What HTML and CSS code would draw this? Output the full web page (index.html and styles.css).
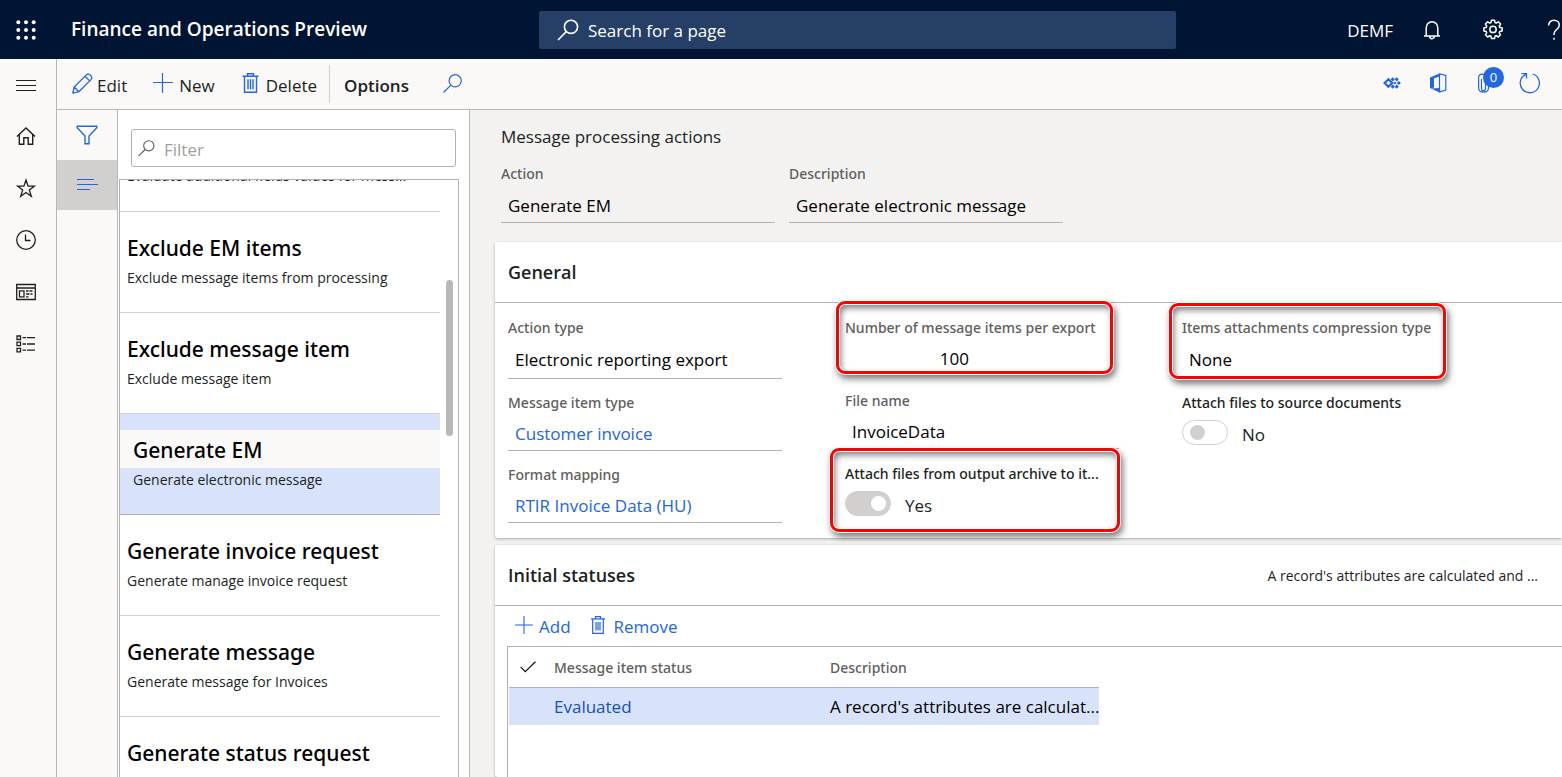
FILE: index.html
```html
<!DOCTYPE html>
<html lang="en">
<head>
<meta charset="utf-8">
<title>Message processing actions</title>
<link rel="stylesheet" href="styles.css">
</head>
<body>
<div class="app">
  <header class="topbar">
    <div class="brand">
      <button class="waffle" aria-label="App launcher">
        <svg width="20" height="20" viewBox="0 0 20 20" fill="currentColor"><circle cx="2.3" cy="2.3" r="2"/><circle cx="10" cy="2.3" r="2"/><circle cx="17.7" cy="2.3" r="2"/><circle cx="2.3" cy="10" r="2"/><circle cx="10" cy="10" r="2"/><circle cx="17.7" cy="10" r="2"/><circle cx="2.3" cy="17.7" r="2"/><circle cx="10" cy="17.7" r="2"/><circle cx="17.7" cy="17.7" r="2"/></svg>
      </button>
      <a class="product" href="#">Finance and Operations Preview</a>
    </div>
    <label class="search">
      <svg width="22" height="22" viewBox="0 0 22 22" fill="none" stroke="currentColor" stroke-width="1.6"><circle cx="14" cy="7.8" r="6.6"/><path d="M9.3 12.6 1 21"/></svg>
      <input class="search-input" type="text" placeholder="Search for a page" aria-label="Search for a page">
    </label>
    <div class="top-actions">
      <button class="company">DEMF</button>
      <button class="top-btn" aria-label="Notifications">
        <svg width="18" height="20" viewBox="0 0 18 20" fill="none" stroke="currentColor" stroke-width="1.5"><path d="M1 16H17M3.2 16V8.2C3.2 4.4 5.8 1.8 9 1.8S14.8 4.4 14.8 8.2V16M6.6 16.3C6.6 19.4 11.4 19.4 11.4 16.3"/></svg>
      </button>
      <button class="top-btn" aria-label="Settings">
        <svg width="22" height="22" viewBox="0 0 22 22" fill="none" stroke="currentColor" stroke-width="1.5" stroke-linejoin="round"><path d="M9 3.500 9.500 1.200h3l.5 2.300 1.300.6 2-1.300 2.300 2.200-1.300 2 .5 1.400 2.300.4v3.200l-2.300.5-.6 1.300 1.300 2-2.200 2.200-2-1.300-1.300.6-.5 2.300h-3L9 17.300l-1.300-.6-2 1.300-2.300-2.200 1.300-2-.5-1.300-2.300-.5V8.800l2.300-.4.5-1.400-1.300-2 2.300-2.200 2 1.300z"/><circle cx="11" cy="10.400" r="3.200"/></svg>
      </button>
      <button class="top-btn" aria-label="Help">
        <svg width="14" height="22" viewBox="0 0 14 22" fill="none" stroke="currentColor" stroke-width="1.5"><path d="M1.6 6.5C1.6 3.200 4 1.200 7 1.200s5.300 1.900 5.300 4.800c0 4.300-5.300 4.700-5.300 8.800v1.300M7 18.800v2"/></svg>
      </button>
    </div>
  </header>

  <div class="shell">
    <nav class="rail" aria-label="Main">
      <button class="rail-btn rail-menu" aria-label="Expand the navigation pane"><svg width="20" height="12" viewBox="0 0 20 12" stroke="currentColor" stroke-width="1" shape-rendering="crispEdges"><path d="M0 .5H20M0 5.5H20M0 10.5H20"/></svg></button>
      <button class="rail-btn" aria-label="Home"><svg width="20" height="20" viewBox="0 0 20 20" fill="none" stroke="currentColor" stroke-width="1.4"><path d="M1 10.6 10 1.9l9 8.7M3.3 8.700v9.600h4.500v-6.500h4.400v6.500h4.500V8.700"/></svg></button>
      <button class="rail-btn" aria-label="Favorites"><svg width="20" height="20" viewBox="0 0 20 20" fill="none" stroke="currentColor" stroke-width="1.3"><path d="M10 2l2.100 6.100h6.400l-5.200 3.900 2 6.300L10 14.500l-5.300 3.800 2-6.300L1.500 8.100h6.400z"/></svg></button>
      <button class="rail-btn" aria-label="Recent"><svg width="20" height="20" viewBox="0 0 20 20" fill="none" stroke="currentColor" stroke-width="1.3"><circle cx="10" cy="10" r="9.3"/><path d="M9.500 4.500v6h5"/></svg></button>
      <button class="rail-btn" aria-label="Workspaces"><svg width="20" height="18" viewBox="0 0 20 18" fill="none" stroke="currentColor" stroke-width="1.3"><path d="M.7 1.500h18.600v15H.7zM.7 5h18.600M3.500 7.800h4.500v6H3.500zM10 8h2.500M10 11h3.500M10 13.800h2.500M13.500 8h3M14.500 11h2"/></svg></button>
      <button class="rail-btn" aria-label="Modules"><svg width="20" height="18" viewBox="0 0 20 18" fill="none" stroke="currentColor" stroke-width="1.3"><path d="M1 1h3.500v3.500H1zM1 7.200h3.500v3.500H1zM1 13.400h3.500v3.500H1zM6.500 2.700h3.500M11 2.700h8M6.500 9h3.500M11 9h8M6.500 15.200h3.500M11 15.200h8"/></svg></button>
    </nav>

    <div class="workspace">
      <div class="commands">
        <button class="cmd cmd-edit"><svg width="21" height="21" viewBox="0 0 21 21" fill="none" stroke="currentColor" stroke-width="1.3" stroke-linejoin="round"><path d="M.8 20.200 2.200 14 14.300 1.900a2.600 2.600 0 0 1 3.700 0l1 1a2.600 2.600 0 0 1 0 3.700L6.900 18.700zM2.200 14l4.700 4.700M13 3.200l4.700 4.700"/></svg>Edit</button>
        <button class="cmd cmd-new"><svg width="20" height="20" viewBox="0 0 20 20" stroke="currentColor" stroke-width="1.2"><path d="M0 9.500H20M9.500 0V20"/></svg>New</button>
        <button class="cmd cmd-delete"><svg width="17" height="20" viewBox="0 0 17 20" fill="none" stroke="currentColor" stroke-width="1.4"><path d="M.5 3.300h16M5.500 3V.8h6V3M2.500 3.500v15.700h12V3.500M6 6.300v10M8.500 6.300v10M11 6.300v10"/></svg>Delete</button>
        <button class="cmd cmd-options">Options</button>
        <button class="cmd cmd-search" aria-label="Search actions"><svg width="19" height="19" viewBox="0 0 19 19" fill="none" stroke="currentColor" stroke-width="1.2"><circle cx="12.2" cy="6.8" r="6.1"/><path d="M7.9 11.100.5 18.500"/></svg></button>
        <div class="cmd-right">
          <button class="cmd-icon" aria-label="Power Apps"><svg width="18" height="12" viewBox="0 0 18 12"><path d="M5.400 2.200 9.200 6 5.400 9.800 1.600 6z" fill="none" stroke="currentColor" stroke-width="2.200"/><path d="M9.700.2l2.100 2.100-2.100 2.100-2.100-2.100zM13.700.2l2.100 2.100-2.100 2.100-2.100-2.100zM15.800 3.900l2.100 2.100-2.100 2.100-2.100-2.100zM9.700 7.600l2.100 2.100-2.100 2.100-2.100-2.100zM13.700 7.600l2.100 2.100-2.100 2.100-2.100-2.100zM11.800 4.500 13.300 6l-1.500 1.500L10.300 6z" fill="currentColor"/></svg></button>
          <button class="cmd-icon" aria-label="Open in Microsoft Office"><svg width="17" height="20" viewBox="0 0 17 20"><path fill="currentColor" d="M0 4.500 9.500.5v3L4 5.200v9.300L1.200 15.600 0 15zM1 15.500l8.500-.4V19.500z"/><path d="M9.500.9 15.800 2.500v14.500L9.500 18.900z" fill="none" stroke="currentColor" stroke-width="1.2"/></svg></button>
          <button class="cmd-icon cmd-attach" aria-label="Attachments"><svg width="12" height="20" viewBox="0 0 12 20" fill="none" stroke="currentColor" stroke-width="1.2"><path d="M3.500 6v9.500c0 3 4 3 4 0V4.500c0-4.500-6.900-4.500-6.900 0V15c0 5.500 9.900 5.500 9.900 0V5"/></svg><span class="badge">0</span></button>
          <button class="cmd-icon" aria-label="Refresh"><svg width="22" height="22" viewBox="0 0 22 22" fill="none" stroke="currentColor" stroke-width="1.3"><path d="M13.800 2A9.600 9.600 0 1 1 6 2.800M2.500 1.700h5V6.500M7.500 1.700l-3 2.600"/></svg></button>
        </div>
      </div>

      <div class="columns">
        <div class="strip">
          <button class="strip-btn" aria-label="Show filters"><svg width="22" height="20" viewBox="0 0 22 20" fill="none" stroke="currentColor" stroke-width="1.4"><path d="M1.200 1.200h19.600v1.500L13 11v7.800H9V11L1.200 2.700z"/></svg></button>
          <button class="strip-btn strip-on" aria-label="Show list"><svg width="21" height="12" viewBox="0 0 21 12" stroke="currentColor" stroke-width="1" shape-rendering="crispEdges"><path d="M0 .5H17M0 5.500H21M0 10.500H13"/></svg></button>
        </div>

        <aside class="list-pane">
          <label class="filter">
            <svg width="17" height="17" viewBox="0 0 17 17" fill="none" stroke="currentColor" stroke-width="1.1"><circle cx="10.8" cy="5.8" r="5.1"/><path d="M7.100 9.500.5 16.100"/></svg>
            <input class="filter-input" type="text" placeholder="Filter" aria-label="Filter">
          </label>
          <div class="list-box">
            <ul class="records">
              <li class="record record-first"><a class="record-link" href="#"><span class="record-sub">Evaluate additional fields values for mess...</span></a></li>
              <li class="record"><a class="record-link" href="#"><span class="record-title">Exclude EM items</span><span class="record-sub">Exclude message items from processing</span></a></li>
              <li class="record"><a class="record-link" href="#"><span class="record-title">Exclude message item</span><span class="record-sub">Exclude message item</span></a></li>
              <li class="record record-on"><a class="record-link" href="#"><span class="record-title">Generate EM</span><span class="record-sub">Generate electronic message</span></a></li>
              <li class="record"><a class="record-link" href="#"><span class="record-title">Generate invoice request</span><span class="record-sub">Generate manage invoice request</span></a></li>
              <li class="record"><a class="record-link" href="#"><span class="record-title">Generate message</span><span class="record-sub">Generate message for Invoices</span></a></li>
              <li class="record"><a class="record-link" href="#"><span class="record-title">Generate status request</span></a></li>
            </ul>
            <div class="thumb"></div>
          </div>
        </aside>

        <main class="form">
          <h1 class="form-title">Message processing actions</h1>
          <div class="key-fields">
            <div class="field"><label class="label" for="action">Action</label><input class="value" id="action" value="Generate EM" readonly></div>
            <div class="field"><label class="label" for="desc">Description</label><input class="value" id="desc" value="Generate electronic message" readonly></div>
          </div>

          <section class="card">
            <h2 class="card-head">General</h2>
            <div class="fields">
              <div class="field-col">
                <div class="field"><label class="label" for="type">Action type</label><input class="value value-combo" id="type" value="Electronic reporting export" readonly></div>
                <div class="field"><span class="label">Message item type</span><a class="value value-link" href="#">Customer invoice</a></div>
                <div class="field"><span class="label">Format mapping</span><a class="value value-link" href="#">RTIR Invoice Data (HU)</a></div>
              </div>
              <div class="field-col field-col-mid">
                <div class="field marked marked-number"><label class="label" for="count">Number of message items per export</label><input class="value value-number" id="count" value="100" readonly></div>
                <div class="field"><label class="label" for="file">File name</label><input class="value" id="file" value="InvoiceData" readonly></div>
                <div class="field marked marked-archive"><label class="label label-strong" for="archive">Attach files from output archive to it...</label><div class="switch-row"><input class="switch" type="checkbox" role="switch" id="archive" checked><span class="switch-text">Yes</span></div></div>
              </div>
              <div class="field-col">
                <div class="field marked marked-type"><label class="label" for="zip">Items attachments compression type</label><input class="value value-combo" id="zip" value="None" readonly></div>
                <div class="field"><label class="label label-strong" for="source">Attach files to source documents</label><div class="switch-row"><input class="switch" type="checkbox" role="switch" id="source"><span class="switch-text">No</span></div></div>
              </div>
            </div>
          </section>

          <section class="card card-last">
            <h2 class="card-head">Initial statuses<span class="card-note">A record's attributes are calculated and ...</span></h2>
            <div class="tools">
              <button class="tool"><svg width="18" height="18" viewBox="0 0 18 18" stroke="currentColor" stroke-width="1.1"><path d="M0 9H18M9 0V18"/></svg>Add</button>
              <button class="tool tool-remove"><svg width="14" height="18" viewBox="0 0 14 18" fill="none" stroke="currentColor" stroke-width="1.2"><path d="M0 2.800h14M4.500 2.600V.7h5v1.900M1.700 3v14.300h10.600V3M5 6v8.500M7 6v8.500M9 6v8.500"/></svg>Remove</button>
            </div>
            <div class="grid-box">
              <table class="grid">
                <thead><tr><th class="g-check"><svg width="16" height="12" viewBox="0 0 16 12" fill="none" stroke="#111" stroke-width="1.2" role="img" aria-label="Select all"><path d="M.6 5.800 5.300 10.700 15.400.7"/></svg></th><th class="g-status">Message item status</th><th>Description</th></tr></thead>
                <tbody><tr><td></td><td><a class="g-link" href="#">Evaluated</a></td><td>A record's attributes are calculat...</td></tr></tbody>
              </table>
            </div>
          </section>
        </main>
      </div>
    </div>
  </div>
</div>
</body>
</html>
```
FILE: styles.css
```css
* { box-sizing: border-box; }

body {
  margin: 0;
  font-family: "Open Sans", "Noto Sans", sans-serif;
  font-size: 17px;
  color: #201f1e;
}

button, input {
  margin: 0;
  padding: 0;
  border: 0;
  background: none;
  font: inherit;
  color: inherit;
}

a { color: inherit; text-decoration: none; }
svg { flex: none; display: block; }
h1, h2, ul { margin: 0; padding: 0; }
input { min-width: 0; outline: 0; }

.app {
  display: flex;
  flex-direction: column;
  height: 100vh;
  overflow: hidden;
}

/* Top bar */
.topbar {
  display: flex;
  flex: none;
  align-items: center;
  height: 59px;
  background: #001433;
  color: #fff;
  overflow: hidden;
}
.brand { display: flex; align-items: center; flex: 0 0 539px; }
.waffle { padding: 0 35px 0 16px; }
.product { padding-bottom: 1px; font-size: 19px; font-weight: 600; }
.search {
  display: flex;
  align-items: center;
  flex: 1;
  gap: 9px;
  height: 38px;
  padding: 1px 18px 0;
  border-radius: 2px;
  background: #263f66;
}
.search-input { flex: 1; }
.search-input::placeholder { color: #fff; opacity: 1; }
.top-actions {
  display: flex;
  align-items: center;
  justify-content: flex-end;
  flex: 0 0 408px;
  margin-right: -22px;
}
.company { padding: 1px 8px 0 0; }
.top-btn { display: flex; justify-content: center; width: 61px; }

/* Shell */
.shell { display: flex; flex: 1; min-height: 0; }
.rail {
  flex: 0 0 57px;
  border-right: 1px solid #bab8b7;
  background: #faf9f8;
}
.rail-btn {
  display: flex;
  align-items: center;
  justify-content: center;
  width: 52px;
  height: 52px;
}
.rail-menu { height: 51px; padding-top: 2px; }
.workspace { display: flex; flex-direction: column; flex: 1; min-width: 0; }

/* Command bar */
.commands {
  display: flex;
  align-items: center;
  flex: none;
  height: 51px;
  padding: 0 9px 0 15px;
  border-bottom: 1px solid #bab8b7;
  background: #faf9f8;
}
.cmd { display: flex; align-items: center; gap: 4px; height: 38px; padding: 2px 0 0; }
.cmd svg, .cmd-icon { color: #2266e3; }
.cmd svg { margin-bottom: 4px; }
.cmd-new { margin-left: 26px; gap: 6px; }
.cmd-delete { margin-left: 27px; gap: 7px; padding-right: 12px; border-right: 1px solid #d2d0ce; }
.cmd-options { margin-left: 14px; font-weight: 600; }
.cmd-search { margin-left: 34px; }
.cmd-right { display: flex; align-items: center; margin-left: auto; padding-bottom: 2px; }
.cmd-icon { display: flex; align-items: center; justify-content: center; position: relative; width: 46px; }
.badge {
  position: absolute;
  left: 22px;
  top: -6px;
  width: 21px;
  height: 21px;
  border-radius: 50%;
  background: #2266e3;
  color: #fff;
  font-size: 13px;
  line-height: 21px;
}

.columns { display: flex; flex: 1; min-height: 0; }
.strip { flex: 0 0 61px; border-right: 1px solid #bab8b7; background: #faf9f8; }
.strip-btn {
  display: flex;
  align-items: center;
  justify-content: center;
  width: 60px;
  height: 50px;
  color: #2266e3;
}
.strip-on { background: #d2d0ce; }

/* Record list */
.list-pane {
  display: flex;
  flex-direction: column;
  flex: 0 0 352px;
  padding: 19px 10px 0 1px;
  border-right: 1px solid #bab8b7;
  background: #fff;
}
.filter {
  display: flex;
  align-items: center;
  gap: 9px;
  height: 38px;
  margin: 0 3px 12px 12px;
  padding: 0 6px;
  border: 1px solid #b3b0ad;
  border-radius: 3px;
  color: #605e5c;
}
.filter-input { flex: 1; padding-top: 3px; }
.filter-input::placeholder { color: #a19f9d; opacity: 1; }
.list-box {
  display: flex;
  flex: 1;
  min-height: 0;
  border: 1px solid #b3b0ad;
  border-bottom: 0;
  overflow: hidden;
}
.records { flex: 1; list-style: none; }
.record { height: 101px; border-bottom: 1px solid #d2d0ce; }
.record-first { height: 48px; margin-top: -16px; }
.record-link { display: block; padding-top: 16px; }
.record-first .record-link { padding-top: 0; }
.record-title {
  display: block;
  padding: 2px 7px 0;
  font-family: "Noto Sans", sans-serif;
  font-size: 21px;
  font-weight: 500;
  line-height: 36px;
  color: #000;
}
.record-sub {
  display: block;
  padding: 0 7px;
  font-size: 14px;
  line-height: 24px;
  white-space: nowrap;
}
.record-on { background: #d8e3fb; border-color: #b3b0ad; }
.record-on .record-title { background: #faf9f8; }
.record-on .record-title, .record-on .record-sub { padding-left: 13px; }
.thumb {
  width: 7px;
  height: 156px;
  margin: 100px 5px 0 6px;
  border-radius: 4px;
  background: #bab8b7;
}

/* Form */
.form {
  display: flex;
  flex-direction: column;
  flex: 1;
  min-width: 0;
  padding: 15px 0 0 25px;
  background: #f3f2f1;
  overflow: hidden;
}
.form-title { padding-left: 6px; font-size: 17px; font-weight: 400; line-height: 24px; }
.key-fields { display: flex; gap: 14px; padding: 15px 6px 19px; }
.key-fields .value { height: 39px; }
.field { width: 274px; }
.label {
  display: block;
  font-family: "Noto Sans", sans-serif;
  font-size: 14px;
  font-weight: 500;
  line-height: 20px;
  white-space: nowrap;
  color: #605e5c;
}
.label-strong { color: #201f1e; }
.value {
  display: block;
  width: 100%;
  height: 38px;
  padding: 4px 7px 0;
  border-bottom: 1px solid #b3b0ad;
  color: #000;
}
.value-combo { height: 41px; padding-top: 2px; }
.value-link { line-height: 33px; color: #2266e3; }
.value-number { padding-right: 150px; text-align: right; }

.card {
  margin-bottom: 7px;
  border-radius: 3px 0 0 3px;
  background: #fff;
  box-shadow: 0 1px 3px rgba(0, 0, 0, 0.3);
}
.card-last { display: flex; flex-direction: column; flex: 1; min-height: 0; margin: 0; }
.card-head {
  display: flex;
  align-items: center;
  justify-content: space-between;
  flex: none;
  height: 61px;
  padding: 0 24px 0 13px;
  border-bottom: 1px solid #b3b0ad;
  font-size: 18px;
  font-weight: 600;
}
.card-note { font-size: 14px; font-weight: 400; }
.fields { display: flex; gap: 63px; padding: 15px 13px; }
.field-col { display: flex; flex-direction: column; gap: 14px; }
.field-col-mid { gap: 15px; }

.switch-row { display: flex; gap: 14px; padding-top: 7px; }
.switch {
  appearance: none;
  flex: none;
  width: 46px;
  height: 25px;
  padding: 4px 7px;
  border: 1px solid #d2d0ce;
  border-radius: 13px;
}
.switch::before {
  content: "";
  display: block;
  width: 15px;
  height: 15px;
  border-radius: 50%;
  background: #d2d0ce;
}
.switch:checked { padding-left: 25px; background: #d2d0ce; }
.switch:checked::before { background: #fff; }
.switch-text { padding-top: 4px; line-height: 21px; }

/* Red outlines drawn over fields */
.marked { position: relative; }
.marked .value { border-color: transparent; }
.marked::after {
  content: "";
  position: absolute;
  border: 3px solid #ff0000;
  border-radius: 9px;
  box-shadow: 0 0 0 1px #fff, 2px 4px 6px 1px rgba(0, 0, 0, 0.5),
    inset 0 0 0 1px #fff, inset 2px 4px 6px rgba(0, 0, 0, 0.5);
  pointer-events: none;
}
.marked-number::after { inset: -17px 6px 2px -9px; }
.marked-type::after { inset: -15px 10px 0 -13px; }
.marked-archive::after { inset: -16px -1px -16px -15px; }

/* Initial statuses */
.tools { display: flex; align-items: center; flex: none; gap: 20px; height: 40px; padding: 0 20px; color: #2266e3; }
.tool { display: flex; align-items: center; gap: 6px; }
.tool svg { margin-bottom: 3px; }
.tool-remove { gap: 9px; }
.grid-box {
  flex: 1;
  margin-left: 12px;
  padding-left: 1px;
  border: 1px solid #b3b0ad;
  border-width: 1px 0 0 1px;
}
.grid { width: 590px; border-collapse: collapse; table-layout: fixed; text-align: left; white-space: nowrap; }
.grid th {
  height: 40px;
  padding: 1px 0 0;
  border-bottom: 1px solid #b3b0ad;
  font-family: "Noto Sans", sans-serif;
  font-size: 14px;
  font-weight: 500;
  color: #605e5c;
}
.grid .g-check { width: 45px; padding-left: 11px; }
.grid .g-status { width: 276px; }
.grid td { height: 38px; padding: 0; background: #d8e3fb; color: #000; }
.g-link { color: #1550b5; }
```
